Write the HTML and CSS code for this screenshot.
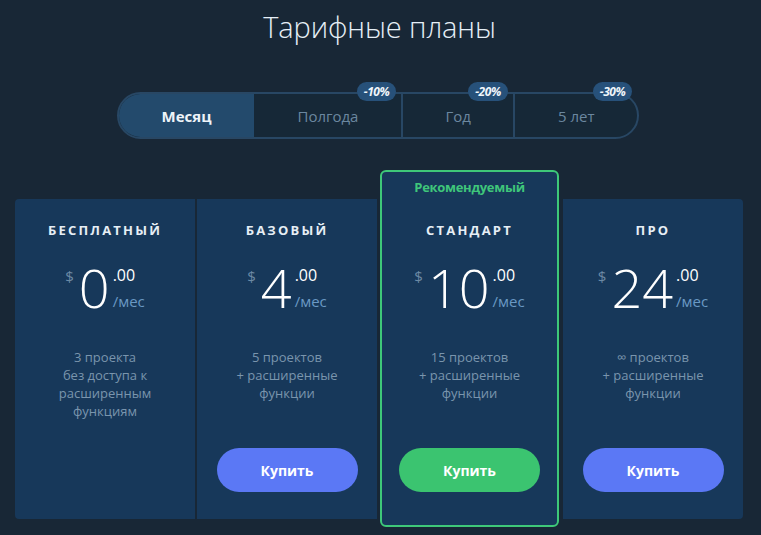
FILE: index.html
```html
<!DOCTYPE html>
<html lang="ru">
<head>
<meta charset="utf-8">
<title>Тарифные планы</title>
<link rel="stylesheet" href="styles.css">
</head>
<body>
<main class="page">
  <h1 class="title">Тарифные планы</h1>

  <div class="toggle">
    <button class="seg active">Месяц</button>
    <button class="seg seg-half">Полгода<span class="badge">-10%</span></button>
    <button class="seg">Год<span class="badge">-20%</span></button>
    <button class="seg seg-five">5 лет<span class="badge">-30%</span></button>
  </div>

  <div class="plans">
    <section class="card card-first">
      <h2 class="plan-name">Бесплатный</h2>
      <div class="price">
        <span class="cur">$</span><span class="amount">0</span>
        <span class="tail"><span class="cents">.00</span><span class="per">/мес</span></span>
      </div>
      <p class="desc">3 проекта<br>без доступа к<br>расширенным<br>функциям</p>
    </section>

    <section class="card">
      <h2 class="plan-name">Базовый</h2>
      <div class="price">
        <span class="cur">$</span><span class="amount">4</span>
        <span class="tail"><span class="cents">.00</span><span class="per">/мес</span></span>
      </div>
      <p class="desc">5 проектов<br>+ расширенные<br>функции</p>
      <button class="buy">Купить</button>
    </section>

    <section class="card card-featured">
      <div class="recommended">Рекомендуемый</div>
      <h2 class="plan-name">Стандарт</h2>
      <div class="price">
        <span class="cur">$</span><span class="amount">10</span>
        <span class="tail"><span class="cents">.00</span><span class="per">/мес</span></span>
      </div>
      <p class="desc">15 проектов<br>+ расширенные<br>функции</p>
      <button class="buy buy-green">Купить</button>
    </section>

    <section class="card card-last">
      <h2 class="plan-name">Про</h2>
      <div class="price">
        <span class="cur">$</span><span class="amount">24</span>
        <span class="tail"><span class="cents">.00</span><span class="per">/мес</span></span>
      </div>
      <p class="desc">∞ проектов<br>+ расширенные<br>функции</p>
      <button class="buy">Купить</button>
    </section>
  </div>
</main>
</body>
</html>
```

FILE: styles.css
```css
* { box-sizing: border-box; }

html, body {
  margin: 0;
  padding: 0;
  background: #182736;
  height: 100%;
}

body {
  font-family: "Open Sans", "Noto Sans", sans-serif;
  color: #e8f0f7;
  overflow: hidden;
}

.page {
  display: flex;
  flex-direction: column;
  align-items: center;
}

.title {
  margin: 7px 0 0;
  font-weight: 300;
  font-size: 29px;
  line-height: 40px;
  color: #e6eff7;
  letter-spacing: -0.1px;
  margin-left: -2px;
}

.toggle {
  margin-top: 45px;
  display: flex;
  border: 2px solid #284764;
  border-radius: 24px;
  background: #162837;
  margin-left: -5px;
}

.seg {
  position: relative;
  font-family: inherit;
  background: transparent;
  border: 0;
  border-left: 2px solid #284764;
  padding: 0 42px;
  height: 43px;
  font-size: 15px;
  color: #6b879f;
  cursor: pointer;
}

.seg.active {
  border-left: 0;
  background: #234a6c;
  color: #eef4f9;
  font-weight: 700;
  border-radius: 22px 0 0 22px;
  padding: 0 43px 0 43px;
}

.seg-half { border-left: 0; padding: 0 43px 0 43px; }
.seg-five { padding: 0 43px; }

.badge {
  position: absolute;
  top: -12px;
  right: 5px;
  padding: 0 7px;
  height: 19px;
  line-height: 19px;
  border-radius: 10px;
  background: #27517a;
  color: #f0f6fb;
  font-size: 12px;
  font-weight: 700;
  font-style: italic;
  letter-spacing: -0.4px;
}

.plans {
  margin-top: 60px;
  margin-left: -3px;
  display: flex;
  align-items: stretch;
}

.card {
  width: 180px;
  min-height: 320px;
  background: #17385a;
  display: flex;
  flex-direction: column;
  align-items: center;
  padding: 22px 10px 27px;
}

.card + .card { margin-left: 2px; }

.card-first { border-radius: 4px 0 0 4px; }
.card-last { border-radius: 0 4px 4px 0; }
.card-featured + .card-last { margin-left: 4px; }

.card.card-featured {
  width: 179px;
  margin: -29px 0 -8px 3px;
  border: 2px solid #3ec879;
  border-radius: 6px;
  padding: 5px 10px 33px;
}

.recommended {
  font-size: 13px;
  line-height: 20px;
  font-weight: 700;
  color: #3fc67a;
  margin-bottom: 24px;
  letter-spacing: -0.3px;
}

.plan-name {
  margin: 0;
  font-size: 13px;
  line-height: 18px;
  font-weight: 700;
  letter-spacing: 2.2px;
  text-transform: uppercase;
  color: #e6eef5;
}

.price {
  margin-top: 21px;
  display: flex;
  height: 54px;
}

.cur {
  font-size: 15px;
  line-height: 1;
  margin-top: 9px;
  margin-right: 5px;
  color: #6d8aa5;
}

.amount {
  font-size: 54px;
  line-height: 54px;
  font-weight: 300;
  color: #ffffff;
}

.tail {
  display: flex;
  flex-direction: column;
  justify-content: space-between;
  margin-left: 3px;
  padding: 7px 0 5px;
}

.cents {
  font-size: 16px;
  line-height: 1;
  color: #ffffff;
}

.per {
  font-size: 15px;
  line-height: 1;
  color: #6a99c4;
}

.desc {
  margin: 34px 0 0;
  font-size: 13px;
  line-height: 18px;
  color: #7a95ad;
  text-align: center;
}

.buy {
  margin-top: auto;
  width: 141px;
  height: 44px;
  border: 0;
  border-radius: 22px;
  background: #5b78f5;
  color: #ffffff;
  font-family: inherit;
  font-size: 14px;
  font-weight: 700;
  cursor: pointer;
}

.buy-green { background: #3bc470; }
```
